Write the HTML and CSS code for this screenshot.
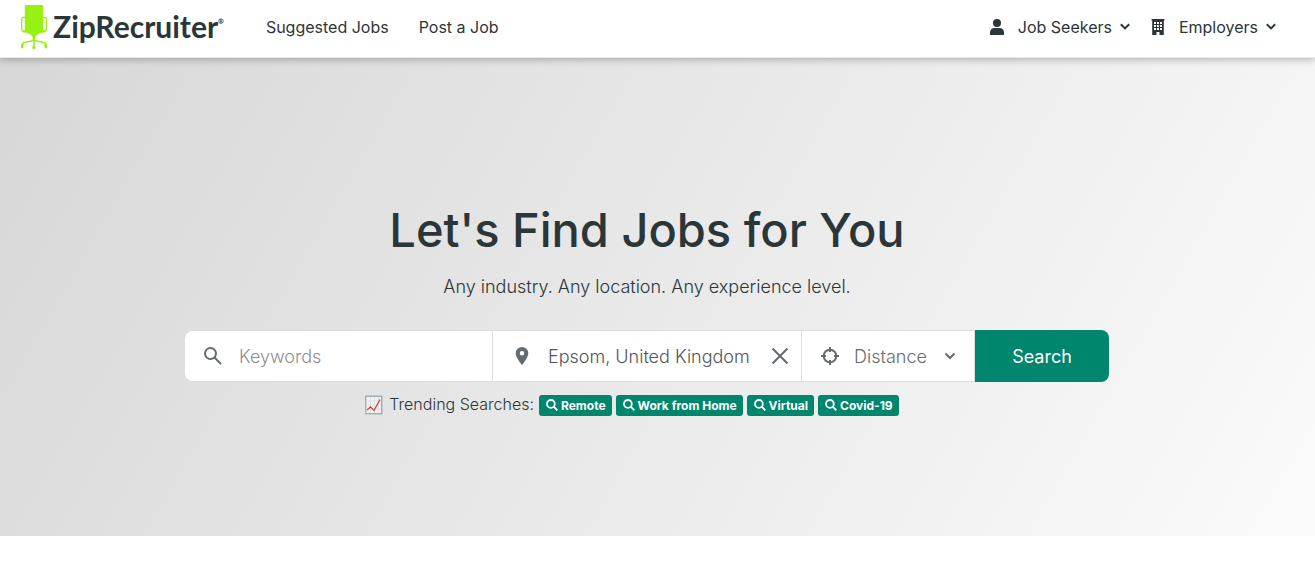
FILE: index.html
```html
<!DOCTYPE html>
<html lang="en">
<head>
    <meta charset="UTF-8">
    <meta name="viewport" content="width=device-width, initial-scale=1.0">
    <title>ZipRecruiter</title>
    <link rel="stylesheet" href="styles.css">
</head>
<body>

<header class="header">
    <a href="#" class="logo">
        <svg class="chair" width="28" height="46" viewBox="0 0 28 46" fill="none" stroke="#99f113">
            <path fill="#99f113" stroke="none" d="M5.500 1h17q.7 0 .7.700V18l-.2 9h2.600v1.200l-5 .8q-4 1-5.300 4v4h-2.600v-4q-1.300-3-5.300-4l-5-.8V27H5l-.2-9V1.700q0-.7.700-.7z"/>
            <path stroke-width="1.300" d="M5 13.500H2.600q-.9 0-.9 1v11.500q0 1 1 1H5M23 13.500h2.400q.9 0 .9 1v11.500q0 1-1 1H23"/>
            <path stroke-width="1.500" d="M14 34v10M2 41.500q0-3 3-3.300l9-1.700 9 1.700q3 .3 3 3.300"/>
            <path fill="#99f113" stroke="none" d="M1 40h2.500v3.500a1.300 1.300 0 0 1-2.500 0zM24.500 40H27v3.500a1.300 1.300 0 0 1-2.500 0z"/>
            <circle cx="14" cy="43.500" r="1.800" fill="#99f113" stroke="none"/>
        </svg>
        <span class="logo-text">ZipRecruiter<sup>®</sup></span>
    </a>
    <nav class="nav">
        <a href="#">Suggested Jobs</a>
        <a href="#">Post a Job</a>
    </nav>
    <div class="menus">
        <button type="button" class="menu">
            <svg width="16" height="18" viewBox="0 0 16 18" fill="#2b3639"><circle cx="8" cy="5" r="4"/><path d="M1 17v-2q0-5 5-5h4q5 0 5 5v2z"/></svg>
            <span>Job Seekers</span>
            <svg width="10" height="8" viewBox="0 0 10 8" fill="none" stroke="#2b3639" stroke-width="2"><path d="M.8 1.200 5 5.400l4.200-4.200"/></svg>
        </button>
        <button type="button" class="menu">
            <svg width="16" height="18" viewBox="0 0 16 18" fill="#2b3639"><path fill-rule="evenodd" d="M1.500 1h13v1.500h-.7V17H9.500v-3h-3v3H2.200V2.500h-.7zM4 4v2h2V4zm3 0v2h2V4zm3 0v2h2V4zM4 7v2h2V7zm3 0v2h2V7zm3 0v2h2V7zm-6 3v2h2v-2zm3 0v2h2v-2zm3 0v2h2v-2z"/></svg>
            <span>Employers</span>
            <svg width="10" height="8" viewBox="0 0 10 8" fill="none" stroke="#2b3639" stroke-width="2"><path d="M.8 1.200 5 5.400l4.200-4.200"/></svg>
        </button>
    </div>
</header>

<main class="hero">
    <h1>Let's Find Jobs for You</h1>
    <p class="sub">Any industry. Any location. Any experience level.</p>

    <form class="search">
        <div class="field keywords">
            <svg width="20" height="20" viewBox="0 0 20 20" fill="none" stroke="#656b70" stroke-width="2"><circle cx="7.500" cy="7.500" r="5.500"/><path d="m11.500 11.500 6.500 6.500"/></svg>
            <input type="text" placeholder="Keywords" aria-label="Keywords">
        </div>
        <div class="field location">
            <svg width="20" height="20" viewBox="0 0 20 20" fill="#656b70"><path fill-rule="evenodd" d="M10 1a6.300 6.300 0 0 0-6.300 6.300C3.700 12 10 19 10 19s6.300-7 6.300-11.700A6.300 6.300 0 0 0 10 1zm0 4a2.200 2.200 0 1 1 0 4.500A2.200 2.200 0 0 1 10 5z"/></svg>
            <input type="text" value="Epsom, United Kingdom" aria-label="Location">
            <button type="button" class="clear" aria-label="Clear location">
                <svg width="18" height="18" viewBox="0 0 18 18" fill="none" stroke="#656b70" stroke-width="2"><path d="m1.500 1.500 15 15M16.500 1.500l-15 15"/></svg>
            </button>
        </div>
        <div class="field distance">
            <svg width="20" height="20" viewBox="0 0 20 20" fill="none" stroke="#656b70" stroke-width="2"><circle cx="10" cy="10" r="6.300"/><path d="M10 1v5M10 14v5M1 10h5M14 10h5"/></svg>
            <select aria-label="Distance">
                <option>Distance</option>
            </select>
            <svg class="arrow" width="12" height="8" viewBox="0 0 12 8" fill="none" stroke="#656b70" stroke-width="2"><path d="M1.500 1.500 6 6l4.500-4.500"/></svg>
        </div>
        <button type="submit" class="btn">Search</button>
    </form>

    <div class="trending">
        <svg class="chart" width="20" height="20" viewBox="0 0 20 20">
            <rect x="1" y=".5" width="17.500" height="19" rx="1" fill="#a8adb1"/>
            <rect x="2.500" y="2" width="14.500" height="16" fill="#f1f3f6"/>
            <path d="M6.500 2v16M10.500 2v16M14.500 2v16M2.500 6H17M2.500 10H17M2.500 14H17" stroke="#dce2e9"/>
            <path d="m3 15 3.500-3 3.500 3.500 6-11" fill="none" stroke="#d3452f" stroke-width="1.300"/>
        </svg>
        <span class="label">Trending Searches:</span>
        <a href="#" class="tag"><svg width="12" height="12" viewBox="0 0 12 12" fill="none" stroke="#fff" stroke-width="1.800"><circle cx="4.900" cy="4.900" r="3.900"/><path d="m7.700 7.700 3.700 3.700"/></svg>Remote</a>
        <a href="#" class="tag"><svg width="12" height="12" viewBox="0 0 12 12" fill="none" stroke="#fff" stroke-width="1.800"><circle cx="4.900" cy="4.900" r="3.900"/><path d="m7.700 7.700 3.700 3.700"/></svg>Work from Home</a>
        <a href="#" class="tag"><svg width="12" height="12" viewBox="0 0 12 12" fill="none" stroke="#fff" stroke-width="1.800"><circle cx="4.900" cy="4.900" r="3.900"/><path d="m7.700 7.700 3.700 3.700"/></svg>Virtual</a>
        <a href="#" class="tag"><svg width="12" height="12" viewBox="0 0 12 12" fill="none" stroke="#fff" stroke-width="1.800"><circle cx="4.900" cy="4.900" r="3.900"/><path d="m7.700 7.700 3.700 3.700"/></svg>Covid-19</a>
    </div>
</main>

</body>
</html>
```
FILE: styles.css
```css
* {
    box-sizing: border-box;
}
body {
    margin: 0;
    background-color: #fff;
    color: #2b3639;
    font-family: Inter, "Liberation Sans", sans-serif;
}
a {
    color: inherit;
    text-decoration: none;
}
svg {
    flex: none;
    display: block;
}
button, input, select {
    font: inherit;
    color: inherit;
    border: 0;
    padding: 0;
    margin: 0;
    background: none;
}

/* header */
.header {
    position: relative;
    display: flex;
    align-items: center;
    padding: 4px 39px 7px 20px;
    background-color: #fff;
    border-bottom: 1px solid #e9ebeb;
    box-shadow: 0 1px 8px rgba(0, 0, 0, .3);
    font-size: 16px;
}
.logo {
    display: flex;
    align-items: center;
    gap: 5px;
}
.logo-text {
    font-family: Lato, sans-serif;
    font-weight: 700;
    font-size: 30px;
    line-height: 34px;
    padding-bottom: 2px;
    white-space: nowrap;
}
.logo-text sup {
    font-size: 7px;
    line-height: 8px;
    vertical-align: 14px;
}
.nav {
    display: flex;
    gap: 30px;
    margin-left: 42px;
}
.menus {
    display: flex;
    gap: 20px;
    margin-left: auto;
}
.menu {
    display: flex;
    align-items: center;
    cursor: pointer;
}
.menu span {
    margin: 0 8px 0 13px;
}

/* hero */
.hero {
    display: flex;
    flex-direction: column;
    align-items: center;
    padding: 139px 21px 118px 0;
    background-image: linear-gradient(120deg, #d7d7d7, #fbfbfb);
}
h1 {
    margin: 0;
    font-size: 47px;
    font-weight: 500;
    line-height: 66px;
}
.sub {
    margin: 10px 0 30px;
    font-size: 18px;
    font-weight: 300;
    line-height: 27px;
}
.search {
    display: grid;
    grid-template-columns: 308fr 309fr 173fr 134fr;
    width: 924px;
    max-width: 100%;
    height: 52px;
    font-size: 18px;
}
.field {
    display: flex;
    align-items: center;
    gap: 16px;
    min-width: 0;
    padding: 0 18px;
    background-color: #fff;
    border: 1px solid #dcdfe1;
    border-left: 0;
    color: #656b70;
}
.field input {
    flex: 1;
    min-width: 0;
    outline: none;
    font-weight: 300;
}
.location input {
    color: #4f565b;
}
.field input::placeholder {
    color: #8f8f8f;
    opacity: 1;
}
.keywords {
    border-radius: 8px 0 0 8px;
}
.location {
    padding: 0 12px 0 19px;
}
.distance {
    gap: 14px;
}
.distance select {
    flex: 1;
    min-width: 0;
    appearance: none;
    font-weight: 300;
}
.clear {
    cursor: pointer;
}
.btn {
    background-color: #00866c;
    border-radius: 0 8px 8px 0;
    color: #fff;
    cursor: pointer;
}

/* trending */
.trending {
    display: flex;
    align-items: center;
    gap: 4px;
    margin: 10px 31px 0 0;
    font-size: 16px;
    font-weight: 300;
    line-height: 24px;
}
.label {
    padding: 0 1px 2px 1px;
}
.tag {
    display: flex;
    align-items: center;
    gap: 3px;
    padding: 0 6px 0 7px;
    border-radius: 3px;
    background-color: #00866c;
    color: #fff;
    font-size: 12px;
    font-weight: 700;
    line-height: 21px;
}
```
